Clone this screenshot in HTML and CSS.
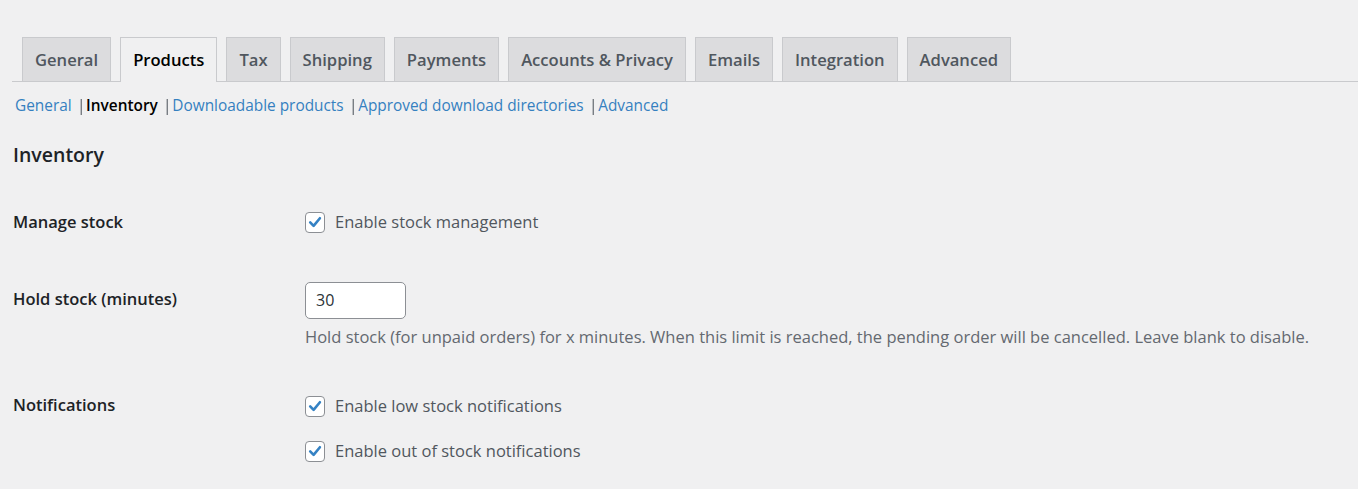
FILE: index.html
```html
<!DOCTYPE html>
<html lang="en">
<head>
<meta charset="utf-8">
<title>Products settings - Inventory</title>
<link rel="stylesheet" href="styles.css">
</head>
<body>
<div class="wrap">
  <nav class="tabs">
    <a class="tab">General</a>
    <a class="tab active">Products</a>
    <a class="tab">Tax</a>
    <a class="tab">Shipping</a>
    <a class="tab">Payments</a>
    <a class="tab">Accounts &amp; Privacy</a>
    <a class="tab">Emails</a>
    <a class="tab">Integration</a>
    <a class="tab">Advanced</a>
  </nav>
  <ul class="subnav">
    <li><a class="link">General</a><span class="sep">|</span></li>
    <li><span class="current">Inventory</span><span class="sep">|</span></li>
    <li><a class="link">Downloadable products</a><span class="sep">|</span></li>
    <li><a class="link">Approved download directories</a><span class="sep">|</span></li>
    <li><a class="link">Advanced</a></li>
  </ul>
  <h2 class="section-title">Inventory</h2>
  <div class="form">
    <div class="row row-manage">
      <div class="label">Manage stock</div>
      <div class="field">
        <label class="check">
          <span class="box"><svg viewBox="0 0 20 20" width="20" height="20"><path d="M5.2 10.4 L8.6 13.9 L14.9 6.2" fill="none" stroke="#3582c4" stroke-width="2.6" stroke-linecap="round" stroke-linejoin="round"/></svg></span>
          <span class="check-text">Enable stock management</span>
        </label>
      </div>
    </div>
    <div class="row row-hold">
      <div class="label">Hold stock (minutes)</div>
      <div class="field">
        <div class="input">30</div>
        <p class="desc">Hold stock (for unpaid orders) for x minutes. When this limit is reached, the pending order will be cancelled. Leave blank to disable.</p>
      </div>
    </div>
    <div class="row row-notify">
      <div class="label">Notifications</div>
      <div class="field stack">
        <label class="check">
          <span class="box"><svg viewBox="0 0 20 20" width="20" height="20"><path d="M5.2 10.4 L8.6 13.9 L14.9 6.2" fill="none" stroke="#3582c4" stroke-width="2.6" stroke-linecap="round" stroke-linejoin="round"/></svg></span>
          <span class="check-text">Enable low stock notifications</span>
        </label>
        <label class="check">
          <span class="box"><svg viewBox="0 0 20 20" width="20" height="20"><path d="M5.2 10.4 L8.6 13.9 L14.9 6.2" fill="none" stroke="#3582c4" stroke-width="2.6" stroke-linecap="round" stroke-linejoin="round"/></svg></span>
          <span class="check-text">Enable out of stock notifications</span>
        </label>
      </div>
    </div>
  </div>
</div>
</body>
</html>
```

FILE: styles.css
```css
html, body {
  margin: 0;
  padding: 0;
  background: #f0f0f1;
}
body {
  font-family: "Open Sans", "Noto Sans", sans-serif;
  color: #1d2327;
  font-size: 16.5px;
  height: 489px;
  overflow: hidden;
}
.wrap {
  padding-left: 12px;
}
.tabs {
  display: flex;
  align-items: flex-end;
  gap: 9px;
  margin-top: 37px;
  padding-left: 10px;
  border-bottom: 1px solid #c9cacd;
  height: 44px;
}
.tab {
  display: block;
  box-sizing: border-box;
  height: 44px;
  padding: 0 12px;
  line-height: 44px;
  font-size: 16.6px;
  font-weight: 600;
  color: #50575e;
  background: #dcdcde;
  border: 1px solid #c9cacd;
  border-bottom: none;
  white-space: nowrap;
}
.tab.active {
  background: #f0f0f1;
  color: #000;
  height: 45px;
  margin-bottom: -1px;
}
.subnav {
  list-style: none;
  margin: 14px 0 0 3px;
  padding: 0;
  display: flex;
  font-size: 15.4px;
  line-height: 20px;
}
.subnav li {
  display: flex;
}
.link {
  color: #3580c0;
}
.current {
  color: #000;
  font-weight: 600;
}
.sep {
  display: inline-block;
  color: #50575e;
  margin: 0 1px 0 5px;
  will-change: transform;
}
.section-title {
  margin: 26px 0 0 1px;
  font-size: 19.5px;
  line-height: 26px;
  font-weight: 600;
  color: #1d2327;
}
.form {
  margin-top: 43px;
}
.row {
  display: grid;
  grid-template-columns: 293px 1fr;
  align-items: start;
}
.label {
  font-weight: 600;
  line-height: 22px;
  color: #1d2327;
  padding-left: 1px;
}
.row-hold .label {
  padding-top: 6px;
}
.row-hold {
  margin-top: 49px;
}
.row-notify {
  margin-top: 46px;
}
.check {
  display: flex;
  align-items: center;
  gap: 10px;
  color: #50575e;
  line-height: 22px;
}
.box {
  box-sizing: border-box;
  width: 20px;
  height: 21px;
  border: 1px solid #8c8f94;
  border-radius: 4px;
  background: #fff;
  display: flex;
  align-items: center;
  justify-content: center;
  overflow: hidden;
}
.box svg {
  display: block;
  flex: none;
}
.input {
  box-sizing: border-box;
  width: 101px;
  height: 37px;
  border: 1px solid #8c8f94;
  border-radius: 5px;
  background: #fff;
  padding: 0 10px;
  line-height: 35px;
  color: #2c3338;
  font-size: 16px;
}
.desc {
  margin: 7px 0 0;
  color: #646970;
  line-height: 22px;
  white-space: nowrap;
}
.stack {
  display: flex;
  flex-direction: column;
  gap: 23px;
  padding-top: 1px;
}
```
